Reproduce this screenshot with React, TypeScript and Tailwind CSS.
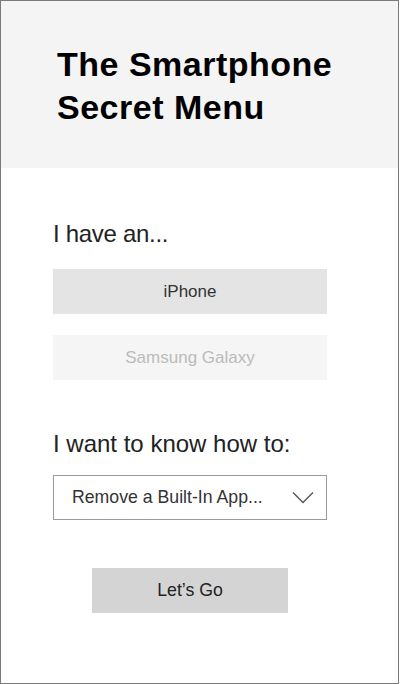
import { useState } from "react";

const font = { fontFamily: '"Liberation Sans", Arial, sans-serif' };

export default function App() {
  const [device, setDevice] = useState<"iphone" | "samsung">("iphone");

  return (
    <div className="w-[400px] h-[684px] bg-white" style={font}>
      <div className="w-[399px] h-[684px] border border-[#7a7a7a] flex flex-col overflow-hidden">
        <div className="h-[167px] bg-[#f4f4f4] pl-[56px] pt-[42px]">
          <h1 className="text-[34px] leading-[43px] font-bold tracking-[0.5px] text-black">
            The Smartphone
            <br />
            Secret Menu
          </h1>
        </div>

        <div className="flex flex-col pl-[52px] w-[326px]">
          <p className="mt-[52px] text-[24px] leading-[28px] text-[#222] tracking-[-0.3px]">I have an...</p>

          <button
            onClick={() => setDevice("iphone")}
            className={`mt-[21px] h-[45px] w-[274px] text-[17px] ${
              device === "iphone" ? "bg-[#e4e4e4] text-[#333]" : "bg-[#f5f5f5] text-[#bbb]"
            }`}
          >
            iPhone
          </button>
          <button
            onClick={() => setDevice("samsung")}
            className={`mt-[21px] h-[45px] w-[274px] text-[17px] ${
              device === "samsung" ? "bg-[#e4e4e4] text-[#333]" : "bg-[#f5f5f5] text-[#bbb]"
            }`}
          >
            Samsung Galaxy
          </button>

          <p className="mt-[50px] text-[24px] leading-[28px] text-[#222]">I want to know how to:</p>

          <div className="mt-[17px] h-[45px] w-[274px] border border-[#9a9a9a] flex items-center justify-between pl-[18px] pr-[12px]">
            <span className="text-[17.7px] text-[#333]">Remove a Built-In App...</span>
            <svg width="22" height="13" viewBox="0 0 22 13" fill="none">
              <path d="M1 1.5 L11 11.5 L21 1.5" stroke="#555" strokeWidth="1.4" />
            </svg>
          </div>

          <div className="flex justify-center">
            <button className="mt-[48px] h-[45px] w-[196px] bg-[#d4d4d4] text-[17.7px] text-[#222]">
              Let’s Go
            </button>
          </div>
        </div>
      </div>
    </div>
  );
}
